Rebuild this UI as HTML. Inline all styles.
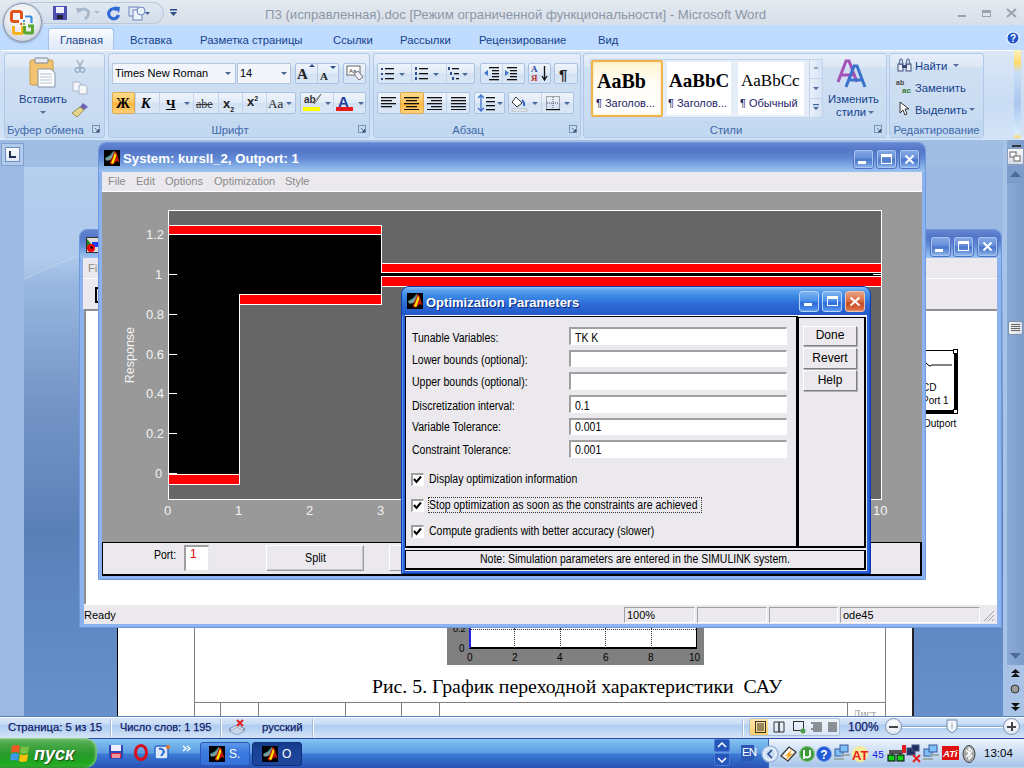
<!DOCTYPE html>
<html><head><meta charset="utf-8">
<style>
*{margin:0;padding:0;box-sizing:border-box}
html,body{width:1024px;height:768px;overflow:hidden;font-family:"Liberation Sans",sans-serif;font-size:11px;position:relative;background:#a9c4e8}
.a{position:absolute}
.t{position:absolute;white-space:nowrap;line-height:1}
.grp{position:absolute;height:85px;border:1px solid #b0c9e8;border-radius:3px;background:linear-gradient(#e6eef9,#dde8f6 15%,#d0e0f3 16%,#c8dbf2 85%)}
.glab{position:absolute;left:0;right:0;bottom:0;height:16px;background:#c3d8f1;color:#3e6aaa;font-size:11.3px;text-align:center;line-height:18px;border-radius:0 0 3px 3px}
.btn{position:absolute;border:1px solid #a9c2e2;border-radius:2px;background:linear-gradient(#eef4fb,#e0eaf6 50%,#d2e1f3 51%,#dbe7f6)}
.win{position:absolute}
.tb{position:absolute;left:0;right:0;top:0;border-radius:7px 7px 0 0}
.cap{position:absolute;color:#fff;font-weight:bold;font-size:13px;white-space:nowrap;line-height:1}
.panel{background:#ebe9ed}
.ed{position:absolute;background:#fff;border-top:2px solid #8e8e8e;border-left:2px solid #8e8e8e;border-right:1px solid #e4e4e4;border-bottom:1px solid #e4e4e4;font-size:12px;padding-left:4px;line-height:14px}
.pb{position:absolute;background:#ebe9ed;border:1px solid;border-color:#fff #888 #888 #fff;box-shadow:1px 1px 0 #666;text-align:center;font-size:12px}
.lbl{position:absolute;font-size:12px;white-space:nowrap;color:#000;line-height:1}
.wt{position:absolute;color:#fff;font-size:13px;line-height:1;white-space:nowrap}
</style></head>
<body>
<!-- WORD TITLE -->
<div class="a" style="left:0;top:0;width:1024px;height:25px;background:linear-gradient(#e4e9f0,#dce3ec 60%,#d7dfe9)"></div>
<div class="a" style="left:0;top:25px;width:1024px;height:25px;background:#bfdbff"></div>
<!-- QAT pill -->
<div class="a" style="left:30px;top:2px;width:134px;height:22px;border-radius:0 11px 11px 0;background:linear-gradient(#dfe7f1,#d3deeb);border:1px solid #b9c9dc;border-left:none"></div>
<!-- office button -->
<div class="a" style="left:3px;top:3px;width:39px;height:39px;border-radius:50%;background:radial-gradient(circle at 50% 35%,#ffffff,#e8ecf2 50%,#c7ced9 90%);border:1px solid #8d96a3;box-shadow:0 0 0 1px rgba(160,190,230,.6),0 1px 2px rgba(0,0,0,.3)"></div>
<svg class="a" style="left:10px;top:10px" width="25" height="25" viewBox="0 0 25 25">
 <path d="M11.5 9 V3.5 Q11.5 1.5 9.5 1.5 H3.5 Q1.5 1.5 1.5 3.5 V9.5 Q1.5 11.5 3.5 11.5 H9" fill="none" stroke="#e0561a" stroke-width="3"/>
 <path d="M15 6.5 H20.5 Q21.5 6.5 21.5 7.5 V13" fill="none" stroke="#3b8ee0" stroke-width="2.2"/>
 <path d="M3.5 16 V22.5 Q3.5 23.5 5 23.5 H11 Q12.5 23.5 12.5 22 V16" fill="none" stroke="#f7b21e" stroke-width="3"/>
 <path d="M14.5 16 V22 Q14.5 23 16 23 H21.5 Q22.5 23 22.5 22 V16 H18" fill="none" stroke="#5ba82e" stroke-width="3"/>
 <rect x="13" y="10" width="2" height="2" fill="#3b8ee0"/><rect x="10" y="13" width="2" height="2" fill="#e0561a"/><rect x="13" y="13" width="2" height="2" fill="#8ab040"/>
</svg>
<!-- QAT icons -->
<svg class="a" style="left:53px;top:6px" width="15" height="14" viewBox="0 0 15 14"><rect x="0" y="0" width="14" height="14" fill="#4a4fb0"/><rect x="3" y="1" width="8" height="6" fill="#eef"/><rect x="4" y="9" width="6" height="4" fill="#223"/></svg>
<svg class="a" style="left:75px;top:5px" width="16" height="16" viewBox="0 0 16 16"><path d="M4 6 Q9 2 13 6 Q15 10 10 14" fill="none" stroke="#a9b8cc" stroke-width="3"/><path d="M1 3 L7 3 L3 9z" fill="#a9b8cc"/></svg>
<svg class="a" style="left:94px;top:11px" width="6" height="4"><path d="M0 0h6L3 3z" fill="#a9b8cc"/></svg>
<svg class="a" style="left:106px;top:5px" width="15" height="16" viewBox="0 0 15 16"><path d="M11 5 A5 5 0 1 0 12.5 10" fill="none" stroke="#2e6bd4" stroke-width="3.2"/><path d="M8 1.5 L14 2 L13 8z" fill="#2e6bd4"/></svg>
<svg class="a" style="left:128px;top:5px" width="24" height="17" viewBox="0 0 24 17"><rect x="1" y="2" width="9" height="9" fill="#dfe9f7" stroke="#6a86b8"/><rect x="5" y="5" width="9" height="10" fill="#eef3fb" stroke="#6a86b8"/><circle cx="13" cy="6" r="4" fill="#e8f0fa" stroke="#6a86b8"/><path d="M17 7h5l-2.5 3z" fill="#445f95"/></svg>
<svg class="a" style="left:170px;top:9px" width="7" height="8"><rect x="0" y="0" width="7" height="1.5" fill="#2a4a8a"/><path d="M0 3h7L3.5 7z" fill="#2a4a8a"/></svg>
<div class="t" style="left:265px;top:8px;font-size:13.2px;color:#8d97a6">П3 (исправленная).doc [Режим ограниченной функциональности] - Microsoft Word</div>
<div class="a" style="left:958px;top:15px;width:8px;height:2px;background:#9ba3ad"></div>
<div class="a" style="left:982px;top:10px;width:9px;height:7px;border:1.5px solid #9ba3ad;border-top-width:3px"></div>
<svg class="a" style="left:1006px;top:8px" width="11" height="10"><path d="M1 1L10 9M10 1L1 9" stroke="#9ba3ad" stroke-width="2"/></svg>
<svg class="a" style="left:1006px;top:31px" width="14" height="14" viewBox="0 0 14 14"><circle cx="7" cy="7" r="6.5" fill="#fff"/><circle cx="7" cy="7" r="5.5" fill="#1f56c9"/><text x="7" y="11" font-size="10" font-weight="bold" fill="#fff" text-anchor="middle" font-family="Liberation Sans">?</text></svg>
<!-- tabs -->
<div class="a" style="left:48px;top:28px;width:66px;height:23px;border:1px solid #a6c2e6;border-bottom:none;border-radius:3px 3px 0 0;background:linear-gradient(#fafcfe,#e6eef9 60%,#dfe9f7)"></div>
<div class="t" style="left:60px;top:35px;font-size:11.3px;color:#15428b">Главная</div>
<div class="t" style="left:130px;top:35px;font-size:11.3px;color:#15428b">Вставка</div>
<div class="t" style="left:200px;top:35px;font-size:11.3px;color:#15428b">Разметка страницы</div>
<div class="t" style="left:333px;top:35px;font-size:11.3px;color:#15428b">Ссылки</div>
<div class="t" style="left:400px;top:35px;font-size:11.3px;color:#15428b">Рассылки</div>
<div class="t" style="left:479px;top:35px;font-size:11.3px;color:#15428b">Рецензирование</div>
<div class="t" style="left:598px;top:35px;font-size:11.3px;color:#15428b">Вид</div>
<!-- RIBBON -->
<div class="a" style="left:0;top:50px;width:1024px;height:91px;background:linear-gradient(#dbe7f6,#c9dcf4 60%,#d5e5f8);border-bottom:1px solid #a3bcdc"></div>
<div class="a" style="left:0;top:138px;width:1024px;height:1px;background:#e4f6fd"></div>
<div class="a" style="left:1px;top:50px;width:1021px;height:89px;border:1px solid #cfe0f5;border-top:1px solid #fff;border-radius:0 0 3px 3px"></div>
<!-- group: clipboard -->
<div class="grp" style="left:4px;top:53px;width:101px"><div class="glab" style="padding-right:18px">Буфер обмена</div></div>
<svg class="a" style="left:29px;top:57px" width="28" height="32" viewBox="0 0 28 32">
 <rect x="1" y="3" width="23" height="25" rx="2" fill="#f2c46f" stroke="#c99a45"/>
 <rect x="6" y="1" width="13" height="5" rx="1" fill="#e8ecf1" stroke="#7a8596"/>
 <path d="M9 12 h13 l4 4 v14 h-17z" fill="#fbfcfd" stroke="#8793a6"/>
 <path d="M11 17h12M11 20h12M11 23h12M11 26h12" stroke="#b9c3d1"/>
</svg>
<div class="t" style="left:19px;top:94px;font-size:11.3px;color:#15428b">Вставить</div>
<svg class="a" style="left:40px;top:111px" width="6" height="4"><path d="M0 0h6L3 3z" fill="#566f9b"/></svg>
<svg class="a" style="left:74px;top:59px" width="12" height="14" viewBox="0 0 12 14"><path d="M3 1 L7 9 M9 1 L5 9" stroke="#9fb0c8" stroke-width="1.5"/><circle cx="3.5" cy="11" r="2.3" fill="none" stroke="#9fb0c8" stroke-width="1.5"/><circle cx="8.5" cy="11" r="2.3" fill="none" stroke="#9fb0c8" stroke-width="1.5"/></svg>
<svg class="a" style="left:72px;top:81px" width="16" height="14" viewBox="0 0 16 14"><path d="M1 1h6l2 2v7H1z" fill="#f4f6f9" stroke="#a8b4c6"/><path d="M7 4h6l2 2v7H7z" fill="#f4f6f9" stroke="#a8b4c6"/></svg>
<svg class="a" style="left:71px;top:102px" width="18" height="16" viewBox="0 0 18 16"><path d="M12 1 L17 5 L13 8 L9 5z" fill="#6b66b8"/><path d="M9 5 L13 8 L6 15 L1 11z" fill="#e5d58a" stroke="#8c7a3a" stroke-width=".8"/></svg>
<svg class="a" style="left:92px;top:125px" width="8" height="8"><rect x="0.5" y="0.5" width="7" height="7" fill="none" stroke="#7c93b8"/><path d="M3 3l4 4M7 4v3H4" stroke="#5a7099"/></svg>

<!-- group: font -->
<div class="grp" style="left:108px;top:53px;width:262px"><div class="glab" style="padding-right:18px">Шрифт</div></div>
<div class="a" style="left:112px;top:63px;width:124px;height:21px;border:1px solid #b3c7e1;background:#f2f6fc"></div>
<div class="t" style="left:115px;top:68px;font-size:11px;color:#000">Times New Roman</div>
<svg class="a" style="left:225px;top:72px" width="6" height="4"><path d="M0 0h6L3 3z" fill="#4a5f85"/></svg>
<div class="a" style="left:237px;top:63px;width:54px;height:21px;border:1px solid #b3c7e1;background:#f2f6fc"></div>
<div class="t" style="left:240px;top:68px;font-size:11px;color:#000">14</div>
<svg class="a" style="left:281px;top:72px" width="6" height="4"><path d="M0 0h6L3 3z" fill="#4a5f85"/></svg>
<div class="btn" style="left:295px;top:63px;width:44px;height:21px"></div>
<div class="a" style="left:317px;top:64px;width:1px;height:19px;background:#b8cbe3"></div>
<div class="t" style="left:297px;top:66px;font:bold 15px 'Liberation Serif';color:#222">A</div>
<svg class="a" style="left:309px;top:64px" width="6" height="4"><path d="M0 3h6L3 0z" fill="#2c4f8a"/></svg>
<div class="t" style="left:320px;top:70px;font:bold 11px 'Liberation Serif';color:#222">A</div>
<svg class="a" style="left:330px;top:66px" width="6" height="4"><path d="M0 0h6L3 3z" fill="#2c4f8a"/></svg>
<div class="btn" style="left:343px;top:63px;width:23px;height:21px"></div>
<svg class="a" style="left:346px;top:65px" width="18" height="17" viewBox="0 0 18 17"><rect x="1" y="1" width="13" height="9" fill="#fff" stroke="#666"/><text x="3" y="8" font-size="6" font-family="Liberation Sans" fill="#333">Aa</text><path d="M8 9 L13 15 L17 12 L12 6z" fill="#eef" stroke="#777"/></svg>
<!-- row 2 font -->
<div class="btn" style="left:112px;top:92px;width:184px;height:22px"></div>
<div class="a" style="left:112px;top:92px;width:23px;height:22px;border:1px solid #e0a950;border-radius:2px;background:linear-gradient(#ffdc8a,#ffc15a 50%,#ffb53d 51%,#ffd27a)"></div>
<div class="t" style="left:116px;top:96px;font:bold 14px 'Liberation Serif';color:#000">Ж</div>
<div class="t" style="left:141px;top:96px;font:bold italic 14px 'Liberation Serif';color:#000">К</div>
<div class="t" style="left:166px;top:96px;font:bold 13px 'Liberation Serif';color:#000;text-decoration:underline">Ч</div>
<svg class="a" style="left:184px;top:102px" width="6" height="4"><path d="M0 0h6L3 3z" fill="#4a6a9e"/></svg>
<div class="t" style="left:196px;top:97px;font:12px 'Liberation Serif';color:#333;text-decoration:line-through">abe</div>
<div class="t" style="left:223px;top:96px;font:bold 13px 'Liberation Sans';color:#222">x<sub style="font-size:7px">2</sub></div>
<div class="t" style="left:247px;top:94px;font:bold 13px 'Liberation Sans';color:#222">x<sup style="font-size:7px">2</sup></div>
<div class="t" style="left:268px;top:96px;font:13px 'Liberation Serif';color:#222">Aa</div>
<svg class="a" style="left:286px;top:102px" width="6" height="4"><path d="M0 0h6L3 3z" fill="#4a6a9e"/></svg>
<div class="a" style="left:135px;top:93px;width:1px;height:20px;background:#c2d3ea"></div>
<div class="a" style="left:159px;top:93px;width:1px;height:20px;background:#c2d3ea"></div>
<div class="a" style="left:193px;top:93px;width:1px;height:20px;background:#c2d3ea"></div>
<div class="a" style="left:218px;top:93px;width:1px;height:20px;background:#c2d3ea"></div>
<div class="a" style="left:242px;top:93px;width:1px;height:20px;background:#c2d3ea"></div>
<div class="a" style="left:266px;top:93px;width:1px;height:20px;background:#c2d3ea"></div>
<div class="btn" style="left:300px;top:92px;width:66px;height:22px"></div>
<div class="t" style="left:304px;top:94px;font:bold 10px 'Liberation Sans';color:#333">ab</div>
<div class="a" style="left:303px;top:107px;width:17px;height:4px;background:#ffff00"></div>
<svg class="a" style="left:313px;top:93px" width="10" height="12"><path d="M8 1L3 9l-2 2 1-3z" fill="#eee" stroke="#777"/></svg>
<svg class="a" style="left:325px;top:102px" width="6" height="4"><path d="M0 0h6L3 3z" fill="#4a6a9e"/></svg>
<div class="a" style="left:333px;top:93px;width:1px;height:20px;background:#c2d3ea"></div>
<div class="t" style="left:338px;top:93px;font:bold 15px 'Liberation Sans';color:#1f3fa0">A</div>
<div class="a" style="left:336px;top:107px;width:17px;height:4px;background:#e81a1a"></div>
<svg class="a" style="left:358px;top:102px" width="6" height="4"><path d="M0 0h6L3 3z" fill="#4a6a9e"/></svg>
<svg class="a" style="left:358px;top:125px" width="8" height="8"><rect x="0.5" y="0.5" width="7" height="7" fill="none" stroke="#7c93b8"/><path d="M3 3l4 4M7 4v3H4" stroke="#5a7099"/></svg>

<!-- group: paragraph -->
<div class="grp" style="left:373px;top:53px;width:208px"><div class="glab" style="padding-right:18px">Абзац</div></div>
<div class="btn" style="left:377px;top:63px;width:98px;height:21px"></div>
<div class="a" style="left:411px;top:64px;width:1px;height:19px;background:#c2d3ea"></div>
<div class="a" style="left:446px;top:64px;width:1px;height:19px;background:#c2d3ea"></div>
<svg class="a" style="left:380px;top:66px" width="94" height="15" viewBox="0 0 94 15">
 <g fill="#2d4f8e"><rect x="1" y="2" width="2" height="2"/><rect x="1" y="7" width="2" height="2"/><rect x="1" y="12" width="2" height="2"/></g>
 <g fill="#111"><rect x="5" y="2" width="9" height="1.3"/><rect x="5" y="7" width="9" height="1.3"/><rect x="5" y="12" width="9" height="1.3"/></g>
 <path d="M19 7h6l-3 3z" fill="#4a6a9e"/>
 <g fill="#2d4f8e"><rect x="35" y="1" width="2" height="3"/><rect x="35" y="6" width="2" height="3"/><rect x="35" y="11" width="2" height="3"/></g>
 <g fill="#111"><rect x="39" y="2" width="9" height="1.3"/><rect x="39" y="7" width="9" height="1.3"/><rect x="39" y="12" width="9" height="1.3"/></g>
 <path d="M53 7h6l-3 3z" fill="#4a6a9e"/>
 <g fill="#2d4f8e"><rect x="68" y="1" width="2" height="3"/><rect x="70" y="6" width="2" height="3"/><rect x="72" y="11" width="2" height="3"/></g>
 <g fill="#111"><rect x="72" y="2" width="7" height="1.3"/><rect x="74" y="7" width="5" height="1.3"/><rect x="76" y="12" width="3" height="1.3"/></g>
 <path d="M82 7h6l-3 3z" fill="#4a6a9e"/>
</svg>
<div class="btn" style="left:480px;top:63px;width:45px;height:21px"></div>
<div class="a" style="left:502px;top:64px;width:1px;height:19px;background:#c2d3ea"></div>
<svg class="a" style="left:483px;top:66px" width="40" height="15" viewBox="0 0 40 15"><g fill="#111"><rect x="6" y="1" width="10" height="1.3"/><rect x="9" y="4" width="7" height="1.3"/><rect x="9" y="7" width="7" height="1.3"/><rect x="9" y="10" width="7" height="1.3"/><rect x="6" y="13" width="10" height="1.3"/></g><path d="M1 7l4-3v6z" fill="#3f72c9"/>
<g fill="#111"><rect x="24" y="1" width="10" height="1.3"/><rect x="27" y="4" width="7" height="1.3"/><rect x="27" y="7" width="7" height="1.3"/><rect x="27" y="10" width="7" height="1.3"/><rect x="24" y="13" width="10" height="1.3"/></g><path d="M26 7l-4-3v6z" fill="#3f72c9"/></svg>
<div class="btn" style="left:528px;top:63px;width:23px;height:21px"></div>
<div class="t" style="left:531px;top:64px;font:bold 9px 'Liberation Serif';color:#2a4a9a">A</div>
<div class="t" style="left:531px;top:73px;font:bold 9px 'Liberation Serif';color:#b03030">Я</div>
<svg class="a" style="left:541px;top:65px" width="7" height="17"><path d="M3.5 1v13M1 11l2.5 4 2.5-4" stroke="#111" stroke-width="1.3" fill="none"/></svg>
<div class="btn" style="left:554px;top:63px;width:24px;height:21px"></div>
<div class="t" style="left:559px;top:66px;font:bold 15px 'Liberation Sans';color:#222">¶</div>
<div class="btn" style="left:377px;top:92px;width:93px;height:22px"></div>
<div class="a" style="left:400px;top:92px;width:24px;height:22px;border:1px solid #e0a950;border-radius:2px;background:linear-gradient(#ffdc8a,#ffc15a 50%,#ffb53d 51%,#ffd27a)"></div>
<svg class="a" style="left:380px;top:96px" width="88" height="14" viewBox="0 0 88 14"><g fill="#111">
<rect x="1" y="1" width="15" height="1.3"/><rect x="1" y="4" width="11" height="1.3"/><rect x="1" y="7" width="15" height="1.3"/><rect x="1" y="10" width="11" height="1.3"/>
<rect x="24" y="1" width="15" height="1.3"/><rect x="26" y="4" width="11" height="1.3"/><rect x="24" y="7" width="15" height="1.3"/><rect x="26" y="10" width="11" height="1.3"/><rect x="24" y="13" width="15" height="1"/>
<rect x="47" y="1" width="15" height="1.3"/><rect x="51" y="4" width="11" height="1.3"/><rect x="47" y="7" width="15" height="1.3"/><rect x="51" y="10" width="11" height="1.3"/><rect x="47" y="13" width="15" height="1"/>
<rect x="71" y="1" width="15" height="1.3"/><rect x="71" y="4" width="15" height="1.3"/><rect x="71" y="7" width="15" height="1.3"/><rect x="71" y="10" width="15" height="1.3"/><rect x="71" y="13" width="15" height="1"/></g></svg>
<div class="a" style="left:446px;top:93px;width:1px;height:20px;background:#c2d3ea"></div>
<div class="btn" style="left:474px;top:92px;width:31px;height:22px"></div>
<svg class="a" style="left:477px;top:94px" width="26" height="18" viewBox="0 0 26 18"><path d="M4 1v16M1 4l3-3 3 3M1 14l3 3 3-3" stroke="#3f72c9" stroke-width="1.3" fill="none"/><g fill="#111"><rect x="9" y="3" width="9" height="1.3"/><rect x="9" y="7" width="9" height="1.3"/><rect x="9" y="11" width="9" height="1.3"/><rect x="9" y="15" width="9" height="1.3"/></g><path d="M20 8h6l-3 3z" fill="#4a6a9e"/></svg>
<div class="btn" style="left:508px;top:92px;width:66px;height:22px"></div>
<div class="a" style="left:541px;top:93px;width:1px;height:20px;background:#c2d3ea"></div>
<svg class="a" style="left:511px;top:94px" width="60" height="18" viewBox="0 0 60 18"><path d="M5 3 L11 9 L6 13 L1 8z" fill="#fff" stroke="#333"/><path d="M11 6 q3 3 2 6" stroke="#3a67c0" stroke-width="2" fill="none"/><rect x="1" y="15" width="15" height="2" fill="#fff" stroke="#999" stroke-width=".6"/><path d="M21 8h6l-3 3z" fill="#4a6a9e"/>
<g stroke="#555" stroke-dasharray="1 1"><rect x="35.5" y="2.5" width="13" height="13" fill="none"/><path d="M42 3v12M36 9h12"/></g><rect x="35" y="15" width="14" height="1.2" fill="#111"/><path d="M53 8h6l-3 3z" fill="#4a6a9e"/></svg>
<svg class="a" style="left:569px;top:125px" width="8" height="8"><rect x="0.5" y="0.5" width="7" height="7" fill="none" stroke="#7c93b8"/><path d="M3 3l4 4M7 4v3H4" stroke="#5a7099"/></svg>

<!-- group: styles -->
<div class="grp" style="left:583px;top:53px;width:304px"><div class="glab" style="padding-right:18px">Стили</div></div>
<div class="a" style="left:590px;top:59px;width:220px;height:59px;border:1px solid #c0d3ea;background:#e4edf8"></div>
<div class="a" style="left:591px;top:60px;width:72px;height:57px;border:2px solid #f0b44a;border-radius:2px;background:linear-gradient(#fff3d0,#fffdf6 40%,#fff);box-shadow:inset 0 0 2px #ffdc8a"></div>
<div class="t" style="left:597px;top:70px;font:bold 20px 'Liberation Serif';color:#000">AaBb</div>
<div class="t" style="left:596px;top:97px;font:11px 'Liberation Sans';color:#1e2466">¶ Заголов...</div>
<div class="a" style="left:667px;top:62px;width:64px;height:53px;background:#fff;overflow:hidden"><div class="t" style="left:2px;top:8px;font:bold 19px 'Liberation Serif';color:#000">AaBbC</div><div class="t" style="left:1px;top:35px;font:11px 'Liberation Sans';color:#1e2466">¶ Заголов...</div></div>
<div class="a" style="left:738px;top:62px;width:66px;height:53px;background:#fff;overflow:hidden"><div class="t" style="left:3px;top:9px;font:17px 'Liberation Serif';color:#000">AaBbCc</div><div class="t" style="left:2px;top:35px;font:11px 'Liberation Sans';color:#1e2466">¶ Обычный</div></div>
<div class="a" style="left:809px;top:59px;width:14px;height:59px;border:1px solid #c0d3ea;background:linear-gradient(90deg,#e9f0fa,#d5e3f5)"></div>
<div class="a" style="left:809px;top:78px;width:14px;height:1px;background:#c0d3ea"></div>
<div class="a" style="left:809px;top:98px;width:14px;height:1px;background:#c0d3ea"></div>
<svg class="a" style="left:813px;top:66px" width="6" height="4"><path d="M0 3h6L3 0z" fill="#9aa8bd"/></svg>
<svg class="a" style="left:813px;top:87px" width="6" height="4"><path d="M0 0h6L3 3z" fill="#4a6a9e"/></svg>
<svg class="a" style="left:813px;top:104px" width="6" height="7"><rect y="0" width="6" height="1.3" fill="#4a6a9e"/><path d="M0 3h6L3 6z" fill="#4a6a9e"/></svg>
<svg class="a" style="left:836px;top:58px" width="34" height="32" viewBox="0 0 34 32"><path d="M2 24 L10 3 L13 3 L21 24 M5 17h13" stroke="#a653b8" stroke-width="3" fill="none"/><path d="M10 29 L18 8 L21 8 L29 29 M13 22h13" stroke="#3a72cc" stroke-width="3" fill="none"/></svg>
<div class="t" style="left:828px;top:94px;font-size:11.3px;color:#15428b">Изменить</div>
<div class="t" style="left:836px;top:107px;font-size:11.3px;color:#15428b">стили</div>
<svg class="a" style="left:868px;top:111px" width="6" height="4"><path d="M0 0h6L3 3z" fill="#566f9b"/></svg>
<svg class="a" style="left:874px;top:125px" width="8" height="8"><rect x="0.5" y="0.5" width="7" height="7" fill="none" stroke="#7c93b8"/><path d="M3 3l4 4M7 4v3H4" stroke="#5a7099"/></svg>

<!-- group: edit -->
<div class="grp" style="left:889px;top:53px;width:95px"><div class="glab">Редактирование</div></div>
<svg class="a" style="left:897px;top:58px" width="16" height="14" viewBox="0 0 16 14"><rect x="1" y="6" width="5" height="7" fill="#e8eef8" stroke="#3a4a78"/><rect x="9" y="6" width="5" height="7" fill="#e8eef8" stroke="#3a4a78"/><rect x="5" y="7" width="5" height="3" fill="#3a4a78"/><path d="M2 6 L3 1 L5 1 L6 6z M9 6 L10 1 L12 1 L13 6z" fill="#c8d6ee" stroke="#3a4a78" stroke-width=".8"/></svg>
<div class="t" style="left:915px;top:61px;font-size:11.3px;color:#15428b">Найти</div>
<svg class="a" style="left:953px;top:64px" width="6" height="4"><path d="M0 0h6L3 3z" fill="#566f9b"/></svg>
<div class="t" style="left:896px;top:79px;font:bold 7px 'Liberation Sans';color:#444">ab</div>
<div class="t" style="left:902px;top:86px;font:bold 8px 'Liberation Sans';color:#2c7a2c">ac</div>
<div class="t" style="left:915px;top:83px;font-size:11.3px;color:#15428b">Заменить</div>
<svg class="a" style="left:899px;top:101px" width="11" height="15" viewBox="0 0 11 15"><path d="M1 1 L1 12 L4 9 L6 14 L8 13 L6 8 L10 8z" fill="#fff" stroke="#333"/></svg>
<div class="t" style="left:915px;top:105px;font-size:11.3px;color:#15428b">Выделить</div>
<svg class="a" style="left:969px;top:108px" width="6" height="4"><path d="M0 0h6L3 3z" fill="#566f9b"/></svg>
<!-- right scroll nub -->
<div class="a" style="left:1014px;top:50px;width:7px;height:88px;background:linear-gradient(#fff3c4,#ffd96a 15%,#c9dff6 25%,#a9c6ee 60%,#d8ecfb 95%,#ffd96a)"></div>
<!-- DOC AREA -->
<div class="a" style="left:0;top:140px;width:1007px;height:576px;background:linear-gradient(#b3cdee 0px,#aac6eb 120px,#98b7e0 145px,#7595c6 260px,#5b80b8 390px,#5f88c2 480px,#6891cc 576px)"></div>
<svg class="a" style="left:24px;top:167px" width="983" height="200"><path d="M0 110 Q120 50 420 0 L0 0z" fill="rgba(255,255,255,0.07)"/><path d="M0 112 Q120 52 420 2" stroke="rgba(255,255,255,0.18)" stroke-width="2" fill="none"/></svg>
<div class="a" style="left:0;top:140px;width:24px;height:576px;background:#9dbae2"></div>
<div class="a" style="left:900px;top:167px;width:107px;height:70px;background:linear-gradient(90deg,rgba(155,185,226,0),#9bb9e2 25px)"></div>
<div class="a" style="left:24px;top:140px;width:983px;height:27px;background:#a0bde4"></div>
<div class="a" style="left:1px;top:143px;width:23px;height:23px;border:1px solid #7e9fcf;background:#b3cbeb"></div>
<div class="a" style="left:5px;top:147px;width:15px;height:15px;border:1px solid #6d8fc5;background:linear-gradient(#fff,#dfe8f5)"></div>
<svg class="a" style="left:9px;top:151px" width="8" height="7"><path d="M1 0v6h6" stroke="#1e2e55" stroke-width="2" fill="none"/></svg>
<!-- page -->
<div class="a" style="left:117px;top:627px;width:797px;height:89px;background:#fff;border-left:1px solid #000;border-right:2px solid #222"></div>
<div class="a" style="left:194px;top:627px;width:1px;height:89px;background:#808080"></div>
<div class="a" style="left:885px;top:627px;width:1px;height:89px;background:#808080"></div>
<div class="a" style="left:194px;top:702px;width:692px;height:1px;background:#808080"></div>
<div class="a" style="left:220px;top:702px;width:1px;height:14px;background:#808080"></div>
<div class="a" style="left:258px;top:702px;width:1px;height:14px;background:#808080"></div>
<div class="a" style="left:345px;top:702px;width:1px;height:14px;background:#808080"></div>
<div class="a" style="left:401px;top:702px;width:1px;height:14px;background:#808080"></div>
<div class="a" style="left:439px;top:702px;width:1px;height:14px;background:#808080"></div>
<div class="a" style="left:847px;top:702px;width:1px;height:14px;background:#808080"></div>
<div class="t" style="left:853px;top:707px;font:11px 'Liberation Serif';color:#999">Лист</div>
<!-- thumb graph -->
<div class="a" style="left:447px;top:627px;width:257px;height:38px;background:#808080"></div>
<div class="a" style="left:469px;top:627px;width:228px;height:22px;background:#fff;border-right:1px solid #000;border-bottom:2px solid #000;border-left:2px solid #2020e0"></div>
<div class="a" style="left:514px;top:628px;width:0;height:20px;border-left:1px dotted #333"></div>
<div class="a" style="left:560px;top:628px;width:0;height:20px;border-left:1px dotted #333"></div>
<div class="a" style="left:605px;top:628px;width:0;height:20px;border-left:1px dotted #333"></div>
<div class="a" style="left:651px;top:628px;width:0;height:20px;border-left:1px dotted #333"></div>
<div class="a" style="left:470px;top:629px;width:226px;height:0;border-top:1px dotted #333"></div>
<div class="t" style="left:453px;top:624px;font:9px 'Liberation Sans';color:#000">0.2</div>
<div class="t" style="left:459px;top:643px;font:10px 'Liberation Sans';color:#000">0</div>
<div class="t" style="left:467px;top:652px;font:10px 'Liberation Sans';color:#000">0</div>
<div class="t" style="left:512px;top:652px;font:10px 'Liberation Sans';color:#000">2</div>
<div class="t" style="left:557px;top:652px;font:10px 'Liberation Sans';color:#000">4</div>
<div class="t" style="left:603px;top:652px;font:10px 'Liberation Sans';color:#000">6</div>
<div class="t" style="left:648px;top:652px;font:10px 'Liberation Sans';color:#000">8</div>
<div class="t" style="left:689px;top:652px;font:10px 'Liberation Sans';color:#000">10</div>
<div class="t" style="left:372px;top:675px;font:19.8px 'Liberation Serif';color:#000">Рис. 5. График переходной характеристики&nbsp; САУ</div>
<!-- vertical scrollbar word -->
<div class="a" style="left:1003px;top:140px;width:4px;height:576px;background:#a8c3e8"></div>
<div class="a" style="left:1007px;top:140px;width:17px;height:576px;background:linear-gradient(90deg,#8aa9d4,#7c9ccb)"></div>
<div class="a" style="left:1012px;top:145px;width:9px;height:2px;background:#333"></div>
<div class="a" style="left:1007px;top:148px;width:17px;height:17px;border:1px solid #8a9bb5;background:linear-gradient(#f4f6fa,#d5dbe6)"></div>
<svg class="a" style="left:1009px;top:150px" width="13" height="13"><rect x="1" y="2" width="6" height="5" fill="#fff" stroke="#666"/><rect x="5" y="6" width="6" height="5" fill="#fff" stroke="#666"/></svg>
<div class="a" style="left:1007px;top:166px;width:17px;height:17px;background:#7c9ccb"></div>
<svg class="a" style="left:1010px;top:171px" width="11" height="6"><path d="M0 6h11L5.5 0z" fill="#4e6a99"/></svg>
<div class="a" style="left:1008px;top:321px;width:15px;height:14px;border:1px solid #8293ad;border-radius:2px;background:linear-gradient(90deg,#f2f4f8,#d6dce6)"></div>
<svg class="a" style="left:1011px;top:324px" width="9" height="8"><path d="M0 .5h9M0 2.5h9M0 4.5h9M0 6.5h9" stroke="#666"/></svg>
<svg class="a" style="left:1010px;top:653px" width="11" height="6"><path d="M0 0h11L5.5 6z" fill="#4e6a99"/></svg>
<div class="a" style="left:1007px;top:665px;width:17px;height:51px;background:#a9c3e6"></div>
<svg class="a" style="left:1011px;top:669px" width="9" height="9"><path d="M0 4h9L4.5 0zM0 8h9L4.5 4z" fill="#111"/></svg>
<svg class="a" style="left:1010px;top:684px" width="10" height="10"><circle cx="5" cy="5" r="4" fill="#999" stroke="#333"/></svg>
<svg class="a" style="left:1011px;top:703px" width="9" height="9"><path d="M0 0h9L4.5 4zM0 4h9L4.5 8z" fill="#111"/></svg>

<!-- WORD STATUS BAR -->
<div class="a" style="left:0;top:716px;width:1024px;height:1px;background:#5a7fb8"></div>
<div class="a" style="left:0;top:717px;width:1024px;height:21px;background:linear-gradient(#d4e4f8 1px,#d4e4f8 2px,#c8dcf4 6px,#b0ccf2 7px,#bed6f2 13px,#d8e6f6 21px);border-top:1px solid #fff"></div>
<div class="t" style="left:8px;top:722px;font-size:11.3px;color:#10206a;-webkit-text-stroke:0.25px #10206a">Страница: 5 из 15</div>
<div class="a" style="left:110px;top:719px;width:1px;height:18px;background:#9db6d8;box-shadow:1px 0 0 #fff"></div>
<div class="t" style="left:120px;top:722px;font-size:10.9px;color:#10206a;-webkit-text-stroke:0.25px #10206a">Число слов: 1 195</div>
<div class="a" style="left:220px;top:719px;width:1px;height:18px;background:#9db6d8;box-shadow:1px 0 0 #fff"></div>
<svg class="a" style="left:228px;top:719px" width="18" height="16" viewBox="0 0 18 16"><path d="M1 10 L9 6 L17 10 L9 14z" fill="#fff" stroke="#6a7fa8"/><path d="M1 12 L9 8 L17 12 L9 16z" fill="#c9d6ea" stroke="#6a7fa8" stroke-width=".6"/><path d="M9 1 L15 7 M15 1 L9 7" stroke="#e02020" stroke-width="2"/></svg>
<div class="t" style="left:262px;top:722px;font-size:11.3px;color:#10206a;-webkit-text-stroke:0.25px #10206a">русский</div>
<div class="a" style="left:312px;top:719px;width:1px;height:18px;background:#9db6d8;box-shadow:1px 0 0 #fff"></div>
<div class="a" style="left:742px;top:719px;width:1px;height:18px;background:#9db6d8;box-shadow:1px 0 0 #fff"></div>
<div class="a" style="left:749px;top:718px;width:91px;height:18px;border:1px solid #a9bfdc;border-radius:2px;background:linear-gradient(#eef4fb,#d9e6f6)"></div>
<div class="a" style="left:750px;top:719px;width:18px;height:16px;background:linear-gradient(#ffe7a6,#ffcf6a)"></div>
<svg class="a" style="left:752px;top:720px" width="86" height="14" viewBox="0 0 86 14"><g fill="none" stroke="#333"><rect x="3.5" y="1.5" width="10" height="11"/><path d="M5 4h7M5 6h7M5 8h7M5 10h7"/>
<path d="M22 2h5v10h-5zM27 2h5v10h-5z"/><rect x="41.5" y="1.5" width="10" height="9"/><path d="M59 3h11M61 5h9M61 7h9M59 9h11M61 11h9"/><path d="M76 3h9M76 5h9M76 7h9M76 9h9M76 11h9"/></g><circle cx="51" cy="11" r="2.5" fill="#4a9a4a"/></svg>
<div class="t" style="left:848px;top:721px;font-size:12px;color:#10206a;-webkit-text-stroke:0.25px #10206a">100%</div>
<div class="a" style="left:885px;top:718px;width:17px;height:17px;border:1px solid #7f93b3;border-radius:50%;background:radial-gradient(circle at 50% 30%,#fff,#d6e0ee)"></div>
<div class="a" style="left:889px;top:726px;width:9px;height:2px;background:#444"></div>
<div class="a" style="left:902px;top:726px;width:101px;height:2px;border-top:1px solid #8fa6c8;border-bottom:1px solid #fff"></div>
<svg class="a" style="left:946px;top:719px" width="12" height="15" viewBox="0 0 12 15"><path d="M1 1h10v9l-5 4-5-4z" fill="#f2f5fa" stroke="#6d85ad"/><path d="M6 4v6" stroke="#9aa"/></svg>
<div class="a" style="left:1003px;top:718px;width:17px;height:17px;border:1px solid #7f93b3;border-radius:50%;background:radial-gradient(circle at 50% 30%,#fff,#d6e0ee)"></div>
<div class="a" style="left:1007px;top:726px;width:9px;height:2px;background:#444"></div>
<div class="a" style="left:1010.5px;top:722px;width:2px;height:9px;background:#444"></div>

<!-- TASKBAR -->
<div class="a" style="left:0;top:738px;width:1024px;height:1px;background:#2846a8"></div>
<div class="a" style="left:0;top:739px;width:1024px;height:29px;background:linear-gradient(#8ac6f2 0px,#78b8ee 4px,#5c9ce2 14px,#3c7cd4 15px,#3268c8 21px,#2a52b4 29px)"></div>
<div class="a" style="left:0;top:738px;width:97px;height:30px;border-radius:0 12px 12px 0;background:linear-gradient(#9ad29a 0px,#62b462 2px,#47a847 6px,#389f38 12px,#2a9a2a 16px,#1ea61e 24px,#2aae2a 28px,#1f7f1f 30px);box-shadow:inset -2px 0 2px rgba(255,255,255,.35)"></div>
<svg class="a" style="left:10px;top:744px" width="20" height="18" viewBox="0 0 20 18"><path d="M2 2 q4 -2 8 0 l-1 7 q-4 -2 -8 0z" fill="#f05a22"/><path d="M11 2 q4 2 8 0 l-1 7 q-4 2 -8 0z" fill="#7ac143"/><path d="M1 10 q4 -2 8 0 l-1 7 q-4 -2 -8 0z" fill="#3a9ae8"/><path d="M10 10 q4 2 8 0 l-1 7 q-4 2 -8 0z" fill="#fcc10f"/></svg>
<div class="t" style="left:34px;top:744px;font:bold italic 18px 'Liberation Sans';color:#fff;text-shadow:1px 1px 1px #1a4a1a">пуск</div>
<svg class="a" style="left:108px;top:744px" width="16" height="16" viewBox="0 0 16 16"><rect x="1" y="1" width="14" height="14" rx="1" fill="#2848b8"/><rect x="3" y="1" width="10" height="6" fill="#eef"/><rect x="3" y="9" width="10" height="5" fill="#e0283a"/><path d="M4 11h8M4 13h8" stroke="#fff"/></svg>
<svg class="a" style="left:133px;top:744px" width="16" height="17" viewBox="0 0 16 17"><ellipse cx="8" cy="8.5" rx="5.5" ry="7" fill="none" stroke="#d8101a" stroke-width="3"/></svg>
<svg class="a" style="left:153px;top:743px" width="18" height="18" viewBox="0 0 18 18"><rect x="2" y="3" width="13" height="13" rx="2" fill="#dfe8f8" stroke="#2a6ad0" stroke-width="1.5"/><path d="M6 6 q4 -1 5 3 l-3 4" stroke="#2a6ad0" stroke-width="2" fill="none"/><circle cx="15" cy="4" r="2" fill="#f07020"/></svg>
<svg class="a" style="left:182px;top:745px" width="9" height="7"><path d="M1 1l3 2.5-3 2.5M5 1l3 2.5-3 2.5" stroke="#fff" stroke-width="1.3" fill="none"/></svg>
<div class="a" style="left:200px;top:742px;width:50px;height:24px;border:1px solid #2a58b8;border-radius:3px;background:linear-gradient(#5c98ec,#3c7ce0 40%,#3470d8)"></div>
<svg class="a" style="left:209px;top:746px" width="16" height="16" viewBox="0 0 16 16"><rect width="16" height="16" fill="#000"/><path d="M1 8.5 L4 7 L7 5 L10 1.5 L11 2 L7.5 9 L5 10.5 L2 10.5z" fill="#7f9c9c"/><path d="M1.5 8 L5 6.5 L10 1" stroke="#2aa8a8" stroke-width=".8" fill="none"/><path d="M10.5 1 L12.5 2.5 L15.5 12.5 L13 11 L8 15 L5.5 13 L7.5 9z" fill="#c0180a"/><path d="M11 2.5 L12.3 5.5 L9.3 14 L7 13 L9 8.5z" fill="#ffe400"/></svg>
<div class="t" style="left:229px;top:748px;font-size:12px;color:#fff">S.</div>
<div class="a" style="left:252px;top:742px;width:50px;height:24px;border:1px solid #10307a;border-radius:3px;background:linear-gradient(#163a8a,#1a4296 30%,#1d469c)"></div>
<svg class="a" style="left:262px;top:746px" width="16" height="16" viewBox="0 0 16 16"><rect width="16" height="16" fill="#000"/><path d="M1 8.5 L4 7 L7 5 L10 1.5 L11 2 L7.5 9 L5 10.5 L2 10.5z" fill="#7f9c9c"/><path d="M1.5 8 L5 6.5 L10 1" stroke="#2aa8a8" stroke-width=".8" fill="none"/><path d="M10.5 1 L12.5 2.5 L15.5 12.5 L13 11 L8 15 L5.5 13 L7.5 9z" fill="#c0180a"/><path d="M11 2.5 L12.3 5.5 L9.3 14 L7 13 L9 8.5z" fill="#ffe400"/></svg>
<div class="t" style="left:282px;top:748px;font-size:12px;color:#fff">O</div>
<div class="a" style="left:714px;top:739px;width:16px;height:13px;border:1px solid #4a7ad0;border-radius:2px;background:#2456bc"></div>
<svg class="a" style="left:717px;top:742px" width="10" height="6"><path d="M1 5l4-4 4 4" stroke="#fff" stroke-width="1.5" fill="none"/></svg>
<div class="a" style="left:714px;top:753px;width:16px;height:13px;border:1px solid #4a7ad0;border-radius:2px;background:#2456bc"></div>
<svg class="a" style="left:717px;top:757px" width="10" height="6"><path d="M1 1l4 4 4-4" stroke="#fff" stroke-width="1.5" fill="none"/></svg>
<div class="a" style="left:768px;top:739px;width:256px;height:29px;background:linear-gradient(#f2f7fd 0px,#e4eefa 3px,#cfe0f4 12px,#b8d0ee 22px,#a6c4ea 27px,#c4d8f2 29px);border-left:1px solid #3a6ac0"></div>
<div class="a" style="left:741px;top:745px;width:13px;height:16px;background:#2a58b4"></div>
<div class="t" style="left:742px;top:747px;font-size:11.5px;color:#fff;letter-spacing:-1px">EN</div>
<svg class="a" style="left:761px;top:744px" width="216" height="21" viewBox="0 0 216 21">
 <circle cx="9" cy="10" r="8" fill="#e4eefa" stroke="#9ab4dc" stroke-width="1.5"/><circle cx="9" cy="10" r="5" fill="#c8dcf4"/><path d="M11 6l-4 4 4 4" stroke="#1f3f8a" stroke-width="1.5" fill="none"/>
 <path d="M20 12 L28 3 L35 8 L27 17z" fill="#fff" stroke="#333" stroke-width="1.3"/><path d="M23 13 L31 5 L29 10 L33 9 L25 16 L27 11z" fill="#f0a020"/>
 <circle cx="46" cy="10" r="7.5" fill="#3a9a3a" stroke="#8ac08a" stroke-width="1.2"/><path d="M43 6v6q3 3 6 0v-6M43 12v3" stroke="#fff" stroke-width="1.8" fill="none"/>
 <circle cx="63" cy="10" r="7.5" fill="#1f5ad8" stroke="#7aa0e8"/><text x="63" y="15" font-size="12" font-weight="bold" fill="#fff" text-anchor="middle" font-family="Liberation Sans">?</text>
 <rect x="74" y="5" width="8" height="7" fill="#7fc0f8" stroke="#3a5a9a"/><rect x="79" y="1" width="8" height="7" fill="#7fc0f8" stroke="#3a5a9a"/><path d="M73 15h10M80 11h9" stroke="#9aa" stroke-width="2"/>
 <circle cx="99" cy="10" r="8" fill="#f4ea9a"/><text x="91" y="16" font-size="13" font-weight="bold" fill="#e82020" font-family="Liberation Sans">AT</text>
 <text x="111" y="14" font-size="10" fill="#1020e0" font-family="Liberation Mono">45</text>
 <rect x="127" y="11" width="7" height="6" fill="#10d010" stroke="#000"/><rect x="136" y="11" width="7" height="6" fill="#10d010" stroke="#000"/><rect x="128" y="6" width="14" height="4" fill="#555"/><path d="M131 9v2M139 9v2" stroke="#000"/><rect x="141" y="1" width="4" height="8" fill="#e02020"/>
 <rect x="146" y="4" width="8" height="7" fill="#203060" stroke="#405080"/><rect x="151" y="1" width="7" height="6" fill="#203060" stroke="#405080"/><path d="M152 11l7 7M159 11l-7 7" stroke="#e02020" stroke-width="2"/>
 <rect x="163" y="5" width="8" height="7" fill="#7fc0f8" stroke="#3a5a9a"/><rect x="168" y="1" width="8" height="7" fill="#7fc0f8" stroke="#3a5a9a"/><path d="M162 15h10M169 11h9" stroke="#9aa" stroke-width="2"/>
 <rect x="181" y="2" width="17" height="14" fill="#e01010"/><text x="182" y="13" font-size="9.5" font-weight="bold" fill="#fff" font-family="Liberation Sans" font-style="italic">ATi</text>
 <ellipse cx="208" cy="10" rx="6" ry="8.5" fill="#a8a8a8" stroke="#444"/><path d="M205 6l6 6-3 3V4l3 3-6 6" stroke="#fff" stroke-width="1.2" fill="none"/>
</svg>
<div class="t" style="left:984px;top:748px;font-size:11.5px;color:#000">13:04</div>
<!-- ========== BACK SIMULINK WINDOW ========== -->
<div class="a" style="left:79px;top:229px;width:923px;height:399px;background:#8bb3ef;border:1px solid #6f97dc;border-radius:8px 8px 0 0"></div>
<div class="a" style="left:80px;top:230px;width:921px;height:28px;border-radius:7px 7px 0 0;background:linear-gradient(#6486d2,#5476c8 25%,#5e86d2 50%,#86b0e8 82%,#9dc3f0)"></div>
<svg class="a" style="left:86px;top:237px" width="14" height="16" viewBox="0 0 14 16"><rect x="0.5" y="0.5" width="13" height="15" fill="#ddd" stroke="#333"/><path d="M1 2 L6 8 L1 10z" fill="#1a8a1a"/><rect x="6" y="5" width="7" height="5" fill="#1a3aff"/><circle cx="5" cy="11" r="4" fill="#e00"/><path d="M5 9v2h2" stroke="#000"/></svg>
<div class="a" style="left:83px;top:258px;width:914px;height:20px;background:#ebe9ed"></div>
<div class="t" style="left:88px;top:263px;font-size:11px;color:#8a8a8a">File</div>
<div class="a" style="left:83px;top:278px;width:914px;height:1px;background:#fff"></div>
<div class="a" style="left:83px;top:279px;width:914px;height:30px;background:#ebe9ed"></div>
<div class="a" style="left:95px;top:287px;width:10px;height:16px;border:2px solid #000;border-right:none"></div>
<div class="a" style="left:84px;top:309px;width:913px;height:2px;background:#8f8f8f"></div>
<div class="a" style="left:84px;top:311px;width:913px;height:294px;background:#fff"></div>
<div class="a" style="left:84px;top:311px;width:2px;height:294px;background:#8f8f8f"></div>
<div class="a" style="left:84px;top:604px;width:913px;height:20px;background:#ebe9ed;border-top:1px solid #fff"></div>
<div class="t" style="left:84px;top:610px;font-size:11px;color:#000">Ready</div>
<div class="a" style="left:624px;top:607px;width:71px;height:16px;border:1px solid;border-color:#a0a0a0 #fff #fff #a0a0a0"></div>
<div class="t" style="left:627px;top:610px;font-size:11px;color:#000">100%</div>
<div class="a" style="left:697px;top:607px;width:70px;height:16px;border:1px solid;border-color:#a0a0a0 #fff #fff #a0a0a0"></div>
<div class="a" style="left:769px;top:607px;width:69px;height:16px;border:1px solid;border-color:#a0a0a0 #fff #fff #a0a0a0"></div>
<div class="a" style="left:840px;top:607px;width:140px;height:16px;border:1px solid;border-color:#a0a0a0 #fff #fff #a0a0a0"></div>
<div class="t" style="left:843px;top:610px;font-size:11px;color:#000">ode45</div>
<svg class="a" style="left:982px;top:609px" width="13" height="13"><path d="M12 2L2 12M12 6L6 12M12 10L10 12" stroke="#a0a0a0" stroke-width="1"/></svg>
<!-- block in canvas -->
<div class="a" style="left:920px;top:350px;width:38px;height:64px;border:1px solid #000;border-right:4px solid #000;border-bottom:4px solid #000;background:#fff"></div>
<svg class="a" style="left:924px;top:360px" width="30" height="10"><path d="M0 5 q2 -4 4 0 q2 2 4 0 l20 0" stroke="#000" fill="none"/></svg>
<div class="t" style="left:922px;top:383px;font-size:10px;color:#000">CD</div>
<div class="t" style="left:922px;top:396px;font-size:10px;color:#000">Port 1</div>
<div class="t" style="left:923px;top:419px;font-size:10px;color:#000">Outport</div>
<div class="a" style="left:953px;top:349px;width:5px;height:5px;border:1px solid #000;background:#fff"></div>
<div class="a" style="left:953px;top:409px;width:5px;height:5px;border:1px solid #000;background:#fff"></div>
<!-- back window buttons -->
<div class="a" style="left:930px;top:236px;width:21px;height:21px;border:1px solid #4f72c4;border-radius:3px;background:linear-gradient(#86a8e4,#6c94dc 40%,#4c78cc 55%,#6a96dc 80%,#9cc0ee);box-shadow:inset 0 0 0 1px #a8c4f0"></div>
<div class="a" style="left:935px;top:249px;width:8px;height:3px;background:#fff"></div>
<div class="a" style="left:953px;top:236px;width:21px;height:21px;border:1px solid #4f72c4;border-radius:3px;background:linear-gradient(#86a8e4,#6c94dc 40%,#4c78cc 55%,#6a96dc 80%,#9cc0ee);box-shadow:inset 0 0 0 1px #a8c4f0"></div>
<div class="a" style="left:958px;top:241px;width:11px;height:10px;border:1px solid #fff;border-top:3px solid #fff"></div>
<div class="a" style="left:977px;top:236px;width:21px;height:21px;border:1px solid #4f72c4;border-radius:3px;background:linear-gradient(#86a8e4,#6c94dc 40%,#4c78cc 55%,#6a96dc 80%,#9cc0ee);box-shadow:inset 0 0 0 1px #a8c4f0"></div>
<svg class="a" style="left:982px;top:241px" width="11" height="11"><path d="M1.5 1.5L9.5 9.5M9.5 1.5L1.5 9.5" stroke="#fff" stroke-width="2"/></svg>

<!-- ========== SYSTEM WINDOW ========== -->
<div class="a" style="left:98px;top:142px;width:828px;height:438px;background:#8bb3ef;border:1px solid #6f97dc;border-radius:8px 8px 0 0"></div>
<div class="a" style="left:99px;top:143px;width:826px;height:29px;border-radius:7px 7px 0 0;background:linear-gradient(#6486d2,#5476c8 25%,#5e86d2 50%,#86b0e8 82%,#9dc3f0)"></div>
<svg class="a" style="left:104px;top:150px" width="16" height="16" viewBox="0 0 16 16"><rect width="16" height="16" fill="#000"/><path d="M1 8.5 L4 7 L7 5 L10 1.5 L11 2 L7.5 9 L5 10.5 L2 10.5z" fill="#7f9c9c"/><path d="M1.5 8 L5 6.5 L10 1" stroke="#2aa8a8" stroke-width=".8" fill="none"/><path d="M10.5 1 L12.5 2.5 L15.5 12.5 L13 11 L8 15 L5.5 13 L7.5 9z" fill="#c0180a"/><path d="M11 2.5 L12.3 5.5 L9.3 14 L7 13 L9 8.5z" fill="#ffe400"/></svg>
<div class="cap" style="left:123px;top:152px;font-size:13.2px">System: kursll_2, Outport: 1</div>
<div class="a" style="left:102px;top:172px;width:820px;height:19px;background:#ebe9ed"></div>
<div class="a" style="left:102px;top:191px;width:820px;height:1px;background:#fff"></div>
<div class="t" style="left:108px;top:176px;font-size:11px;color:#8a8a8a">File</div>
<div class="t" style="left:136px;top:176px;font-size:11px;color:#8a8a8a">Edit</div>
<div class="t" style="left:165px;top:176px;font-size:11px;color:#8a8a8a">Options</div>
<div class="t" style="left:214px;top:176px;font-size:11px;color:#8a8a8a">Optimization</div>
<div class="t" style="left:285px;top:176px;font-size:11px;color:#8a8a8a">Style</div>
<div class="a" style="left:102px;top:192px;width:820px;height:350px;background:#999"></div>
<div class="a" style="left:102px;top:542px;width:820px;height:34px;background:#ebe9ed;border:1px solid #000;border-right:2px solid #000;border-bottom:2px solid #000"></div>
<div class="t" style="left:154px;top:549px;font-size:12px;color:#000;transform:scaleX(0.875);transform-origin:0 0">Port:</div>
<div class="a" style="left:184px;top:545px;width:25px;height:26px;background:#fff;border-top:2px solid #a0a0a0;border-left:2px solid #a0a0a0;border-right:1px solid #e8e8e8;border-bottom:1px solid #e8e8e8"></div>
<div class="t" style="left:190px;top:548px;font-size:12px;color:#e00">1</div>
<div class="a" style="left:266px;top:545px;width:98px;height:26px;background:#ebe9ed;border:1px solid;border-color:#fff #9c9c9c #9c9c9c #fff;box-shadow:inset -1px -1px 0 #c8c8c8"></div>
<div class="t" style="left:305px;top:552px;font-size:12px;color:#000;transform:scaleX(0.9);transform-origin:0 0">Split</div>
<div class="a" style="left:389px;top:545px;width:20px;height:26px;background:#ebe9ed;border:1px solid;border-color:#fff #9c9c9c #9c9c9c #fff"></div>
<!-- axes -->
<div class="a" style="left:168px;top:210px;width:714px;height:290px;background:#666;border:1px solid #fff"></div>
<!-- plot contents -->
<div class="a" style="left:169px;top:235px;width:212px;height:59px;background:#000"></div>
<div class="a" style="left:169px;top:294px;width:70px;height:180px;background:#000"></div>
<div class="a" style="left:381px;top:273px;width:500px;height:3px;background:#000"></div>
<div class="a" style="left:168px;top:225px;width:214px;height:10px;background:#f00;border:1px solid #fff"></div>
<div class="a" style="left:381px;top:263px;width:501px;height:10px;background:#f00;border:1px solid #fff"></div>
<div class="a" style="left:381px;top:276px;width:501px;height:11px;background:#f00;border:1px solid #fff"></div>
<div class="a" style="left:239px;top:294px;width:143px;height:11px;background:#f00;border:1px solid #fff"></div>
<div class="a" style="left:168px;top:474px;width:72px;height:11px;background:#f00;border:1px solid #fff"></div>
<div class="a" style="left:239px;top:305px;width:1px;height:169px;background:#fff"></div>
<div class="a" style="left:381px;top:235px;width:1px;height:28px;background:#fff"></div>
<div class="a" style="left:381px;top:287px;width:1px;height:7px;background:#fff"></div>
<!-- ticks -->
<div class="a" style="left:169px;top:234px;width:8px;height:1px;background:#fff"></div>
<div class="a" style="left:169px;top:274px;width:8px;height:1px;background:#fff"></div>
<div class="a" style="left:169px;top:314px;width:8px;height:1px;background:#fff"></div>
<div class="a" style="left:169px;top:354px;width:8px;height:1px;background:#fff"></div>
<div class="a" style="left:169px;top:393px;width:8px;height:1px;background:#fff"></div>
<div class="a" style="left:169px;top:433px;width:8px;height:1px;background:#fff"></div>
<div class="a" style="left:169px;top:473px;width:8px;height:1px;background:#fff"></div>
<div class="a" style="left:873px;top:274px;width:8px;height:1px;background:#fff"></div>
<div class="t" style="left:146px;top:228px;font-size:13px;color:#f2f2f2">1.2</div>
<div class="t" style="left:155px;top:268px;font-size:13px;color:#f2f2f2">1</div>
<div class="t" style="left:146px;top:308px;font-size:13px;color:#f2f2f2">0.8</div>
<div class="t" style="left:146px;top:348px;font-size:13px;color:#f2f2f2">0.6</div>
<div class="t" style="left:146px;top:387px;font-size:13px;color:#f2f2f2">0.4</div>
<div class="t" style="left:146px;top:427px;font-size:13px;color:#f2f2f2">0.2</div>
<div class="t" style="left:155px;top:467px;font-size:13px;color:#f2f2f2">0</div>
<div class="t" style="left:102px;top:349px;width:56px;font-size:12.5px;color:#f2f2f2;transform:rotate(-90deg);transform-origin:center">Response</div>
<div class="t" style="left:164px;top:504px;font-size:13px;color:#f2f2f2">0</div>
<div class="t" style="left:235px;top:504px;font-size:13px;color:#f2f2f2">1</div>
<div class="t" style="left:306px;top:504px;font-size:13px;color:#f2f2f2">2</div>
<div class="t" style="left:377px;top:504px;font-size:13px;color:#f2f2f2">3</div>
<div class="t" style="left:873px;top:504px;font-size:13px;color:#f2f2f2">10</div>
<!-- system window buttons -->
<div class="a" style="left:853px;top:149px;width:21px;height:20px;border:1px solid #4f72c4;border-radius:3px;background:linear-gradient(#86a8e4,#6c94dc 40%,#4c78cc 55%,#6a96dc 80%,#9cc0ee);box-shadow:inset 0 0 0 1px #a8c4f0"></div>
<div class="a" style="left:858px;top:161px;width:8px;height:3px;background:#fff"></div>
<div class="a" style="left:876px;top:149px;width:21px;height:20px;border:1px solid #4f72c4;border-radius:3px;background:linear-gradient(#86a8e4,#6c94dc 40%,#4c78cc 55%,#6a96dc 80%,#9cc0ee);box-shadow:inset 0 0 0 1px #a8c4f0"></div>
<div class="a" style="left:881px;top:154px;width:11px;height:10px;border:1px solid #fff;border-top:3px solid #fff"></div>
<div class="a" style="left:899px;top:149px;width:21px;height:20px;border:1px solid #4f72c4;border-radius:3px;background:linear-gradient(#86a8e4,#6c94dc 40%,#4c78cc 55%,#6a96dc 80%,#9cc0ee);box-shadow:inset 0 0 0 1px #a8c4f0"></div>
<svg class="a" style="left:904px;top:154px" width="11" height="11"><path d="M1.5 1.5L9.5 9.5M9.5 1.5L1.5 9.5" stroke="#fff" stroke-width="2"/></svg>

<!-- ========== OPTIMIZATION DIALOG ========== -->
<div class="a" style="left:401px;top:286px;width:470px;height:288px;background:#2a62dc;border:1px solid #0a3cb0;border-radius:8px 8px 0 0;box-shadow:inset 1px 0 0 #5a94f0,inset -1px 0 0 #1850c8"></div>
<div class="a" style="left:402px;top:287px;width:468px;height:28px;border-radius:7px 7px 0 0;background:linear-gradient(#8ec0f4,#5aa0ee 12%,#3a86e4 35%,#2e6cd8 60%,#2458c8 100%)"></div>
<svg class="a" style="left:407px;top:293px" width="16" height="16" viewBox="0 0 16 16"><rect width="16" height="16" fill="#000"/><path d="M1 8.5 L4 7 L7 5 L10 1.5 L11 2 L7.5 9 L5 10.5 L2 10.5z" fill="#7f9c9c"/><path d="M1.5 8 L5 6.5 L10 1" stroke="#2aa8a8" stroke-width=".8" fill="none"/><path d="M10.5 1 L12.5 2.5 L15.5 12.5 L13 11 L8 15 L5.5 13 L7.5 9z" fill="#c0180a"/><path d="M11 2.5 L12.3 5.5 L9.3 14 L7 13 L9 8.5z" fill="#ffe400"/></svg>
<div class="cap" style="left:426px;top:296px;font-size:13px;text-shadow:1px 1px 0 #0a2a80">Optimization Parameters</div>
<div class="a" style="left:799px;top:291px;width:20px;height:21px;border:1px solid #b8d4f8;border-radius:3px;background:linear-gradient(#7ab4f4,#4a90ea 45%,#2f6cd8 60%,#4a8ae8 90%,#6aa4f0)"></div>
<div class="a" style="left:804px;top:303px;width:8px;height:3px;background:#fff"></div>
<div class="a" style="left:822px;top:291px;width:20px;height:21px;border:1px solid #b8d4f8;border-radius:3px;background:linear-gradient(#7ab4f4,#4a90ea 45%,#2f6cd8 60%,#4a8ae8 90%,#6aa4f0)"></div>
<div class="a" style="left:827px;top:296px;width:11px;height:10px;border:1px solid #fff;border-top:3px solid #fff"></div>
<div class="a" style="left:845px;top:291px;width:20px;height:21px;border:1px solid #f0c0a8;border-radius:3px;background:linear-gradient(#e8a080,#dc7048 45%,#c84a22 60%,#d86a40 90%,#e89070)"></div>
<svg class="a" style="left:849px;top:296px" width="12" height="11"><path d="M1.5 1.5L10.5 9.5M10.5 1.5L1.5 9.5" stroke="#fff" stroke-width="2"/></svg>
<div class="a" style="left:405px;top:315px;width:462px;height:256px;background:#ebe9ed;border-top:1px solid #fff"></div>
<div class="a" style="left:405px;top:316px;width:393px;height:232px;border:1px solid #000;border-right:2px solid #000;border-bottom:2px solid #000"></div>
<div class="a" style="left:798px;top:317px;width:68px;height:231px;border:1px solid #000;border-right:2px solid #000;border-bottom:2px solid #000"></div>
<div class="a" style="left:405px;top:550px;width:461px;height:20px;border:1px solid #000;border-right:2px solid #000;border-bottom:2px solid #000"></div>
<div class="t" style="left:412px;top:332px;font-size:12px;color:#000;transform:scaleX(0.875);transform-origin:0 0;">Tunable Variables:</div>
<div class="a" style="left:569px;top:327px;width:218px;height:18px;background:#fff;border-top:2px solid #a0a0a0;border-left:2px solid #a0a0a0;border-right:1px solid #fff;border-bottom:1px solid #fff"></div>
<div class="t" style="left:575px;top:332px;font-size:12px;color:#000;transform:scaleX(0.875);transform-origin:0 0;">TK K</div>
<div class="t" style="left:412px;top:354px;font-size:12px;color:#000;transform:scaleX(0.875);transform-origin:0 0;">Lower bounds (optional):</div>
<div class="a" style="left:569px;top:350px;width:218px;height:17px;background:#fff;border-top:2px solid #a0a0a0;border-left:2px solid #a0a0a0;border-right:1px solid #fff;border-bottom:1px solid #fff"></div>
<div class="t" style="left:412px;top:376px;font-size:12px;color:#000;transform:scaleX(0.875);transform-origin:0 0;">Upper bounds (optional):</div>
<div class="a" style="left:569px;top:372px;width:218px;height:18px;background:#fff;border-top:2px solid #a0a0a0;border-left:2px solid #a0a0a0;border-right:1px solid #fff;border-bottom:1px solid #fff"></div>
<div class="t" style="left:412px;top:400px;font-size:12px;color:#000;transform:scaleX(0.875);transform-origin:0 0;">Discretization interval:</div>
<div class="a" style="left:569px;top:395px;width:218px;height:18px;background:#fff;border-top:2px solid #a0a0a0;border-left:2px solid #a0a0a0;border-right:1px solid #fff;border-bottom:1px solid #fff"></div>
<div class="t" style="left:575px;top:400px;font-size:12px;color:#000;transform:scaleX(0.875);transform-origin:0 0;">0.1</div>
<div class="t" style="left:412px;top:421px;font-size:12px;color:#000;transform:scaleX(0.875);transform-origin:0 0;">Variable Tolerance:</div>
<div class="a" style="left:569px;top:418px;width:218px;height:17px;background:#fff;border-top:2px solid #a0a0a0;border-left:2px solid #a0a0a0;border-right:1px solid #fff;border-bottom:1px solid #fff"></div>
<div class="t" style="left:575px;top:421px;font-size:12px;color:#000;transform:scaleX(0.875);transform-origin:0 0;">0.001</div>
<div class="t" style="left:412px;top:444px;font-size:12px;color:#000;transform:scaleX(0.875);transform-origin:0 0;">Constraint Tolerance:</div>
<div class="a" style="left:569px;top:440px;width:218px;height:18px;background:#fff;border-top:2px solid #a0a0a0;border-left:2px solid #a0a0a0;border-right:1px solid #fff;border-bottom:1px solid #fff"></div>
<div class="t" style="left:575px;top:444px;font-size:12px;color:#000;transform:scaleX(0.875);transform-origin:0 0;">0.001</div>
<div class="a" style="left:411px;top:473px;width:13px;height:13px;background:#fff;border-top:2px solid #a0a0a0;border-left:2px solid #a0a0a0;border-right:1px solid #fff;border-bottom:1px solid #fff"></div>
<svg class="a" style="left:413px;top:475px" width="9" height="9"><path d="M1 4 L3.5 7 L8 1.5" stroke="#000" stroke-width="2" fill="none"/></svg>
<div class="t" style="left:429px;top:473px;font-size:12px;color:#000;transform:scaleX(0.875);transform-origin:0 0;">Display optimization information</div>
<div class="a" style="left:411px;top:499px;width:13px;height:13px;background:#fff;border-top:2px solid #a0a0a0;border-left:2px solid #a0a0a0;border-right:1px solid #fff;border-bottom:1px solid #fff"></div>
<svg class="a" style="left:413px;top:501px" width="9" height="9"><path d="M1 4 L3.5 7 L8 1.5" stroke="#000" stroke-width="2" fill="none"/></svg>
<div class="t" style="left:429px;top:499px;font-size:12px;color:#000;transform:scaleX(0.875);transform-origin:0 0;">Stop optimization as soon as the constraints are achieved</div>
<div class="a" style="left:411px;top:525px;width:13px;height:13px;background:#fff;border-top:2px solid #a0a0a0;border-left:2px solid #a0a0a0;border-right:1px solid #fff;border-bottom:1px solid #fff"></div>
<svg class="a" style="left:413px;top:527px" width="9" height="9"><path d="M1 4 L3.5 7 L8 1.5" stroke="#000" stroke-width="2" fill="none"/></svg>
<div class="t" style="left:429px;top:525px;font-size:12px;color:#000;transform:scaleX(0.875);transform-origin:0 0;">Compute gradients with better accuracy (slower)</div>
<div class="a" style="left:428px;top:497px;width:274px;height:16px;border:1px dotted #333"></div>
<div class="a" style="left:803px;top:326px;width:54px;height:20px;background:#ebe9ed;border:1px solid;border-color:#fff #808080 #808080 #fff;box-shadow:1px 1px 0 #b0b0b0"></div>
<div class="t" style="left:803px;top:329px;width:54px;text-align:center;font-size:12px;color:#000">Done</div>
<div class="a" style="left:803px;top:348px;width:54px;height:21px;background:#ebe9ed;border:1px solid;border-color:#fff #808080 #808080 #fff;box-shadow:1px 1px 0 #b0b0b0"></div>
<div class="t" style="left:803px;top:352px;width:54px;text-align:center;font-size:12px;color:#000">Revert</div>
<div class="a" style="left:803px;top:370px;width:54px;height:21px;background:#ebe9ed;border:1px solid;border-color:#fff #808080 #808080 #fff;box-shadow:1px 1px 0 #b0b0b0"></div>
<div class="t" style="left:803px;top:374px;width:54px;text-align:center;font-size:12px;color:#000">Help</div>
<div class="t" style="left:480px;top:553px;font-size:12px;color:#000;transform:scaleX(0.875);transform-origin:0 0;">Note: Simulation parameters are entered in the SIMULINK system.</div>
</body></html>
